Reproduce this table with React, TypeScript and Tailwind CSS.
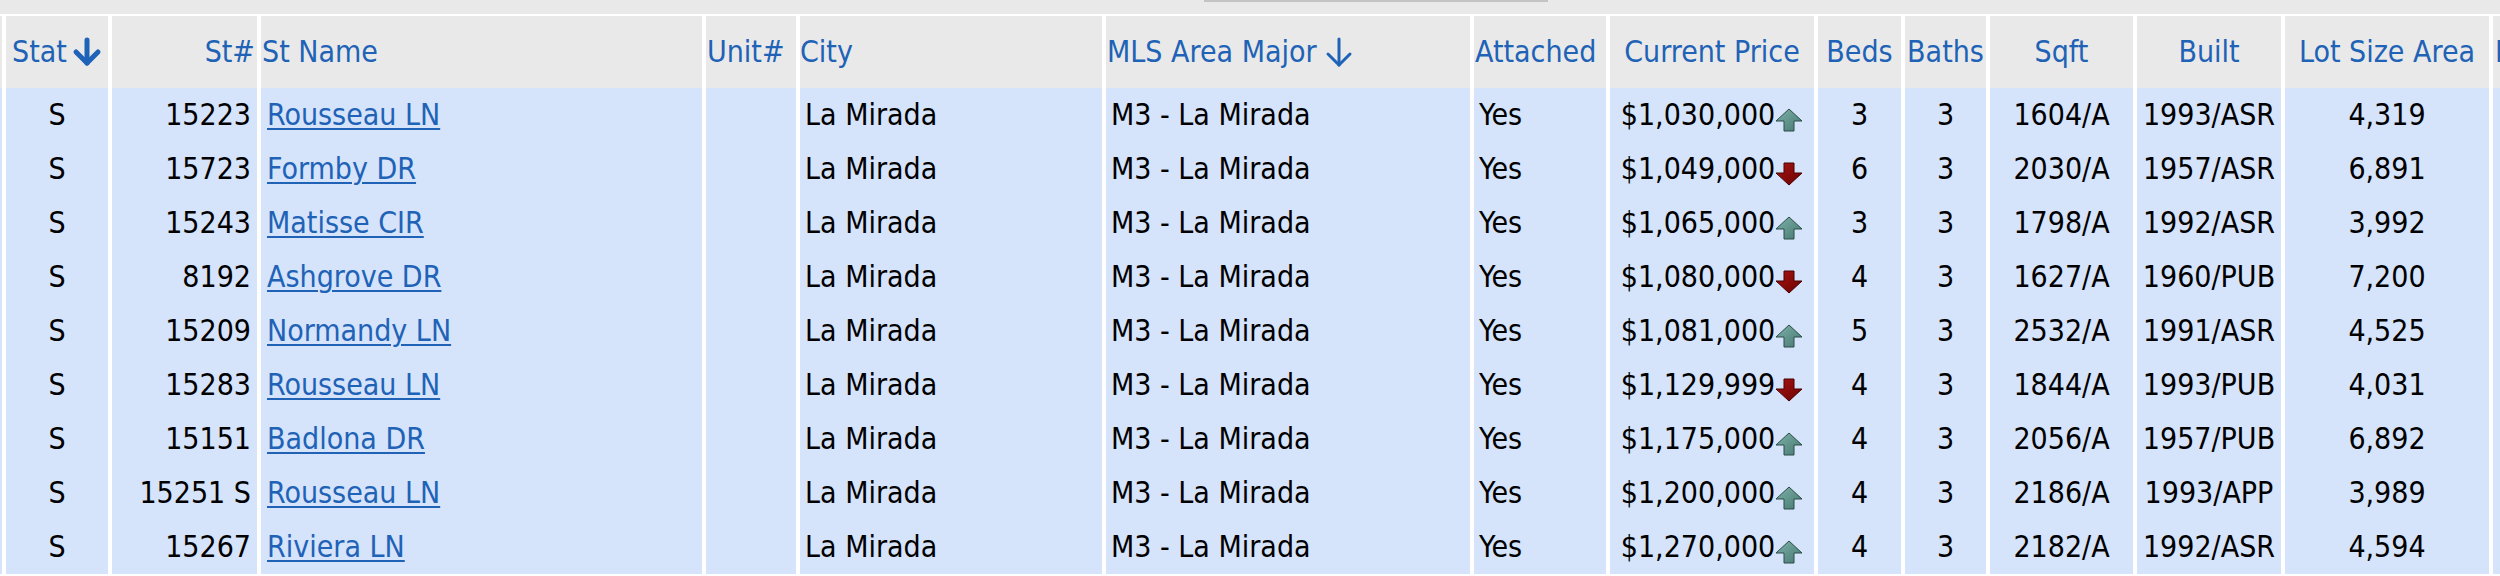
import React from "react";

type Row = {
  st: string;
  name: string;
  price: string;
  up: boolean;
  beds: string;
  sqft: string;
  built: string;
  lot: string;
};

const rows: Row[] = [
  { st: "15223", name: "Rousseau LN", price: "$1,030,000", up: true, beds: "3", sqft: "1604/A", built: "1993/ASR", lot: "4,319" },
  { st: "15723", name: "Formby DR", price: "$1,049,000", up: false, beds: "6", sqft: "2030/A", built: "1957/ASR", lot: "6,891" },
  { st: "15243", name: "Matisse CIR", price: "$1,065,000", up: true, beds: "3", sqft: "1798/A", built: "1992/ASR", lot: "3,992" },
  { st: "8192", name: "Ashgrove DR", price: "$1,080,000", up: false, beds: "4", sqft: "1627/A", built: "1960/PUB", lot: "7,200" },
  { st: "15209", name: "Normandy LN", price: "$1,081,000", up: true, beds: "5", sqft: "2532/A", built: "1991/ASR", lot: "4,525" },
  { st: "15283", name: "Rousseau LN", price: "$1,129,999", up: false, beds: "4", sqft: "1844/A", built: "1993/PUB", lot: "4,031" },
  { st: "15151", name: "Badlona DR", price: "$1,175,000", up: true, beds: "4", sqft: "2056/A", built: "1957/PUB", lot: "6,892" },
  { st: "15251 S", name: "Rousseau LN", price: "$1,200,000", up: true, beds: "4", sqft: "2186/A", built: "1993/APP", lot: "3,989" },
  { st: "15267", name: "Riviera LN", price: "$1,270,000", up: true, beds: "4", sqft: "2182/A", built: "1992/ASR", lot: "4,594" },
];

function BoldArrow() {
  return (
    <svg width="30" height="30" viewBox="0 0 30 30" className="ml-[5px] shrink-0">
      <path d="M15 3 V26" stroke="#1f63b8" strokeWidth="5" strokeLinecap="round" fill="none" />
      <path d="M4 15 L15 26 L26 15" stroke="#1f63b8" strokeWidth="5" strokeLinecap="round" strokeLinejoin="round" fill="none" />
    </svg>
  );
}

function ThinArrow() {
  return (
    <svg width="30" height="32" viewBox="0 0 30 32" className="ml-[7px] shrink-0">
      <path d="M15 3 V29" stroke="#1f63b8" strokeWidth="3" strokeLinecap="round" fill="none" />
      <path d="M4 18 L15 29 L26 18" stroke="#1f63b8" strokeWidth="3" strokeLinecap="round" strokeLinejoin="round" fill="none" />
    </svg>
  );
}

function UpIcon() {
  return (
    <svg width="28" height="24" viewBox="0 0 28 24" className="shrink-0 self-end mb-[10px]">
      <defs>
        <linearGradient id="upg" x1="0" y1="0" x2="1" y2="1">
          <stop offset="0" stopColor="#7fb3aa" />
          <stop offset="1" stopColor="#44776f" />
        </linearGradient>
      </defs>
      <polygon points="14,1 27,13 19,13 19,23 9,23 9,13 1,13" fill="url(#upg)" stroke="#2c4d48" strokeWidth="1" strokeLinejoin="round" />
    </svg>
  );
}

function DownIcon() {
  return (
    <svg width="28" height="24" viewBox="0 0 28 24" className="shrink-0 self-end mb-[10px]">
      <defs>
        <linearGradient id="dng" x1="0" y1="0" x2="1" y2="1">
          <stop offset="0" stopColor="#a81515" />
          <stop offset="1" stopColor="#6a0000" />
        </linearGradient>
      </defs>
      <polygon points="9,1 19,1 19,11 27,11 14,23 1,11 9,11" fill="url(#dng)" stroke="#4a0000" strokeWidth="1" strokeLinejoin="round" />
    </svg>
  );
}

const H = "h-[72px] bg-[#e9e9e9] text-[#2062b6] flex items-center whitespace-nowrap overflow-hidden";
const D = "h-[54px] bg-[#d5e3fb] text-black flex items-center whitespace-nowrap overflow-hidden";

export default function App() {
  return (
    <div className="w-[2500px] h-[576px] overflow-hidden bg-white font-['DejaVu_Sans_Condensed','DejaVu_Sans',sans-serif] [font-stretch:condensed] text-[30px] leading-[36px]">
      <div className="h-[14px] bg-[#e9e9e9] flex">
        <div className="ml-[1204px] w-[344px] h-[2px] bg-[#c4c4c4]" />
      </div>
      <div className="mt-[2px] grid w-max grid-cols-[2px_102px_145px_441px_90px_302px_364px_132px_204px_83px_81px_143px_144px_204px_100px] gap-x-[4px]">
        <div className={H} />
        <div className={`${H} justify-center`}>
          <span>Stat</span>
          <BoldArrow />
        </div>
        <div className={`${H} justify-end pr-[2px]`}>St#</div>
        <div className={`${H} pl-[1px]`}>St Name</div>
        <div className={`${H} pl-[1px]`}>Unit#</div>
        <div className={`${H}`}>City</div>
        <div className={`${H} pl-[1px]`}>
          <span>MLS Area Major</span>
          <ThinArrow />
        </div>
        <div className={`${H} pl-[1px]`}>Attached</div>
        <div className={`${H} justify-center`}>Current Price</div>
        <div className={`${H} justify-center`}>Beds</div>
        <div className={`${H} justify-center`}>Baths</div>
        <div className={`${H} justify-center`}>Sqft</div>
        <div className={`${H} justify-center`}>Built</div>
        <div className={`${H} justify-center`}>Lot Size Area</div>
        <div className={`${H} pl-[2px]`}>Bsmt</div>

        {rows.map((r, i) => (
          <React.Fragment key={i}>
            <div className={D} />
            <div className={`${D} justify-center`}>S</div>
            <div className={`${D} justify-end pr-[6px]`}>{r.st}</div>
            <div className={`${D} pl-[6px]`}>
              <a href="#" className="text-[#2062b6] underline decoration-[2px] underline-offset-[3px]">
                {r.name}
              </a>
            </div>
            <div className={D} />
            <div className={`${D} pl-[5px]`}>La Mirada</div>
            <div className={`${D} pl-[5px]`}>M3 - La Mirada</div>
            <div className={`${D} pl-[5px]`}>Yes</div>
            <div className={`${D} justify-center`}>
              <span>{r.price}</span>
              {r.up ? <UpIcon /> : <DownIcon />}
            </div>
            <div className={`${D} justify-center`}>{r.beds}</div>
            <div className={`${D} justify-center`}>3</div>
            <div className={`${D} justify-center`}>{r.sqft}</div>
            <div className={`${D} justify-center`}>{r.built}</div>
            <div className={`${D} justify-center`}>{r.lot}</div>
            <div className={D} />
          </React.Fragment>
        ))}
      </div>
    </div>
  );
}
